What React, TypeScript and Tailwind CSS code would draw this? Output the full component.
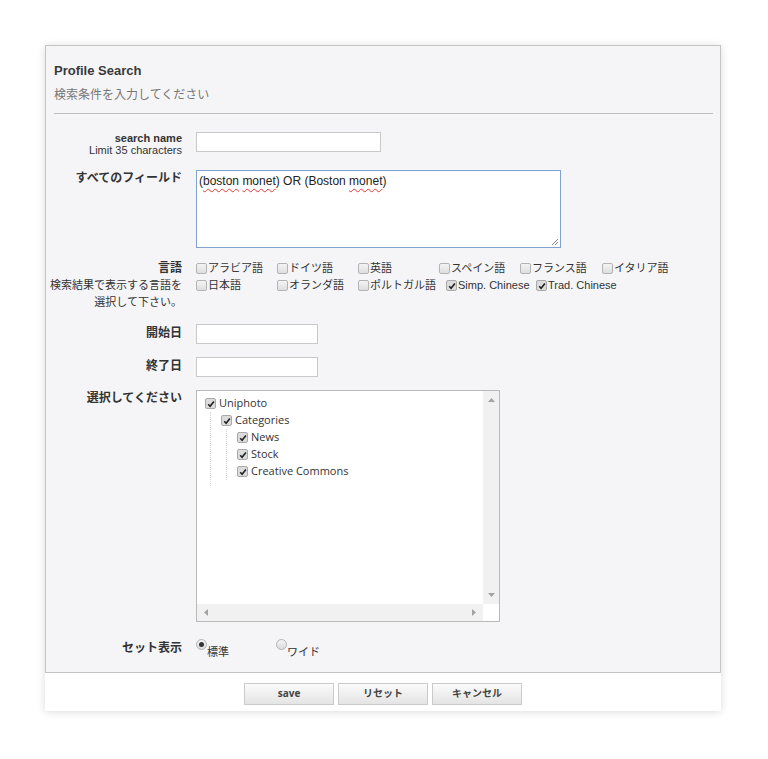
import React from "react";

const jp = { fontFamily: '"Liberation Sans", "Noto Sans CJK JP", sans-serif' };
const os = { fontFamily: '"Open Sans", "Noto Sans CJK JP", sans-serif' };

function Check({ checked, tree }: { checked?: boolean; tree?: boolean }) {
  return (
    <span
      className={
        "inline-flex h-[11px] w-[11px] shrink-0 items-center justify-center rounded-[2px] border " +
        (tree || checked
          ? "border-[#a9a9a9] bg-[#dcdcdc]"
          : "border-[#b3b3b3] bg-gradient-to-b from-[#f4f4f4] to-[#dedede]")
      }
    >
      {checked && (
        <svg width="8" height="8" viewBox="0 0 8 8">
          <path d="M1.2 4.3 L3.1 6.3 L6.9 1.4" fill="none" stroke="#222" strokeWidth="1.6" />
        </svg>
      )}
    </span>
  );
}

function Lang({ label, checked, w }: { label: string; checked?: boolean; w?: string }) {
  return (
    <span className={"flex items-center gap-[1px] whitespace-nowrap " + (w ?? "w-[81px]")}>
      <Check checked={checked} />
      <span>{label}</span>
    </span>
  );
}

function Radio({ on, label }: { on?: boolean; label: string }) {
  return (
    <span className="flex w-[80px] items-start">
      <span className="mt-[-3px] flex h-[11px] w-[11px] items-center justify-center rounded-full border border-[#b3b3b3] bg-gradient-to-b from-[#f4f4f4] to-[#dcdcdc]">
        {on && <span className="h-[5px] w-[5px] rounded-full bg-[#333]" />}
      </span>
      <span className="mt-[2px] text-[11px] text-[#333]">{label}</span>
    </span>
  );
}

function Row({ label, children, cls }: { label: React.ReactNode; children: React.ReactNode; cls: string }) {
  return (
    <div className={"flex items-start " + cls}>
      <div className="flex w-[128px] shrink-0 flex-col items-end text-right">{label}</div>
      <div className="ml-[14px]">{children}</div>
    </div>
  );
}

const Bold = ({ t }: { t: string }) => (
  <div className="whitespace-nowrap text-[12px] font-bold leading-[16px] text-[#333]">{t}</div>
);

function TreeItem({ label, indent }: { label: string; indent: string }) {
  return (
    <div className={"flex h-[17px] items-center gap-[3px] " + indent}>
      <Check checked tree />
      <span className="text-[11px] text-[#333]" style={os}>
        {label}
      </span>
    </div>
  );
}

const wavy = "underline decoration-[#e53935] decoration-wavy decoration-1 underline-offset-[3px]";

export default function App() {
  return (
    <div className="min-h-[759px] bg-white pt-[45px]" style={jp}>
      <div className="ml-[45px] w-[676px] shadow-[0_1px_8px_rgba(0,0,0,0.14)]">
        <div className="border border-[#c4c4c4] bg-[#f5f5f8] pl-[8px] pr-[7px] pt-[17px] pb-[11px]">
          <div className="text-[13px] font-bold leading-[16px] text-[#3a3a3a]">Profile Search</div>
          <div className="mt-[8px] text-[12px] leading-[16px] text-[#777]">検索条件を入力してください</div>
          <div className="mt-[10px] border-t border-[#bdbdbd]" />

          <Row
            cls="mt-[18px]"
            label={
              <div className="flex flex-col items-end whitespace-nowrap text-[11px] leading-[12px] text-[#333]">
                <div className="font-bold">search name</div>
                <div>Limit 35 characters</div>
              </div>
            }
          >
            <div className="h-[20px] w-[185px] border border-[#c9c9c9] bg-white" />
          </Row>

          <Row cls="mt-[14px]" label={<Bold t="すべてのフィールド" />}>
            <div className="relative h-[78px] w-[365px] border border-[#7fa2cf] bg-white px-[2px] py-[2px] text-[12px] leading-[16px] text-[#222]">
              (<span className={wavy}>boston</span> <span className={wavy}>monet</span>) OR (Boston{" "}
              <span className={wavy}>monet</span>)
              <svg className="absolute bottom-[1px] right-[1px]" width="8" height="8" viewBox="0 0 8 8">
                <path d="M7 1 L1 7 M7 4 L4 7" stroke="#888" strokeWidth="1" />
              </svg>
            </div>
          </Row>

          <Row
            cls="mt-[12px]"
            label={
              <div className="flex flex-col items-end whitespace-nowrap text-[11px] leading-[17px] text-[#333]">
                <div className="text-[12px] font-bold">言語</div>
                <div>検索結果で表示する言語を</div>
                <div>選択して下さい。</div>
              </div>
            }
          >
            <div className="text-[11px] leading-[17px] text-[#333]">
              <div className="flex">
                <Lang label="アラビア語" />
                <Lang label="ドイツ語" />
                <Lang label="英語" />
                <Lang label="スペイン語" />
                <Lang label="フランス語" w="w-[82px]" />
                <Lang label="イタリア語" w="w-[70px]" />
              </div>
              <div className="flex">
                <Lang label="日本語" />
                <Lang label="オランダ語" />
                <Lang label="ポルトガル語" w="w-[88px]" />
                <Lang label="Simp. Chinese" checked w="w-[90px]" />
                <Lang label="Trad. Chinese" checked w="w-[90px]" />
              </div>
            </div>
          </Row>

          <Row cls="mt-[13px]" label={<div className="pt-[1px]"><Bold t="開始日" /></div>}>
            <div className="h-[20px] w-[122px] border border-[#c9c9c9] bg-white" />
          </Row>

          <Row cls="mt-[13px]" label={<div className="pt-[1px]"><Bold t="終了日" /></div>}>
            <div className="h-[20px] w-[122px] border border-[#c9c9c9] bg-white" />
          </Row>

          <Row cls="mt-[13px]" label={<Bold t="選択してください" />}>
            <div className="flex h-[232px] w-[304px] flex-col border border-[#b9b9b9] bg-white">
              <div className="flex flex-1">
                <div className="flex-1 pl-[8px] pt-[4px]">
                  <TreeItem label="Uniphoto" indent="" />
                  <div className="ml-[5px] border-l border-dotted border-[#d6d6d6] pb-[6px]">
                    <TreeItem label="Categories" indent="ml-[10px]" />
                    <div className="ml-[15px] border-l border-dotted border-[#d6d6d6]">
                      <TreeItem label="News" indent="ml-[10px]" />
                      <TreeItem label="Stock" indent="ml-[10px]" />
                      <TreeItem label="Creative Commons" indent="ml-[10px]" />
                    </div>
                  </div>
                </div>
                <div className="flex w-[16px] flex-col items-center justify-between bg-[#f1f1f1] py-[7px]">
                  <svg width="7" height="4" viewBox="0 0 7 4"><path d="M0 4 L3.5 0 L7 4Z" fill="#a3a3a3" /></svg>
                  <svg width="7" height="4" viewBox="0 0 7 4"><path d="M0 0 L3.5 4 L7 0Z" fill="#a3a3a3" /></svg>
                </div>
              </div>
              <div className="flex h-[17px]">
                <div className="flex flex-1 items-center justify-between bg-[#f1f1f1] px-[7px]">
                  <svg width="4" height="7" viewBox="0 0 4 7"><path d="M4 0 L0 3.5 L4 7Z" fill="#a3a3a3" /></svg>
                  <svg width="4" height="7" viewBox="0 0 4 7"><path d="M0 0 L4 3.5 L0 7Z" fill="#a3a3a3" /></svg>
                </div>
                <div className="w-[16px] bg-white" />
              </div>
            </div>
          </Row>

          <Row cls="mt-[18px]" label={<Bold t="セット表示" />}>
            <div className="flex pt-[2px]">
              <Radio on label="標準" />
              <Radio label="ワイド" />
            </div>
          </Row>
        </div>

        <div className="flex h-[38px] items-start justify-center gap-[4px] bg-white pt-[10px]">
          {["save", "リセット", "キャンセル"].map((b) => (
            <div
              key={b}
              className="flex h-[22px] w-[90px] items-center justify-center border border-[#cacaca] bg-gradient-to-b from-[#fbfbfb] to-[#e4e4e4] text-[10px] font-bold text-[#444]"
              style={os}
            >
              {b}
            </div>
          ))}
        </div>
      </div>
    </div>
  );
}
